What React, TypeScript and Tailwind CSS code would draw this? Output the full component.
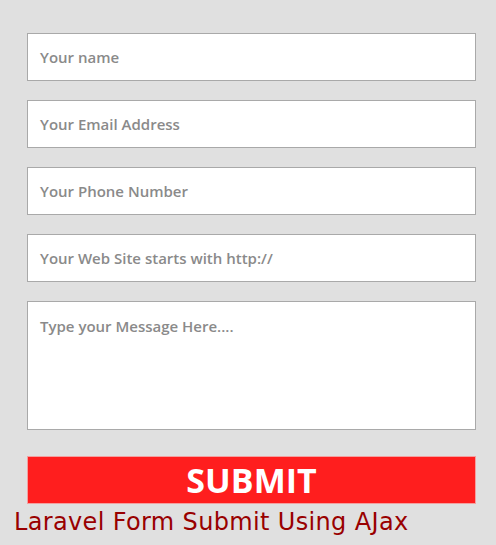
import React from "react";

export default function App() {
  const fields = [
    "Your name",
    "Your Email Address",
    "Your Phone Number",
    "Your Web Site starts with http://",
  ];
  return (
    <div className="w-[496px] h-[545px] bg-[#e0e0e0] overflow-hidden">
      <div className="pt-[33px] pl-[27px] flex flex-col w-[476px]">
        {fields.map((f) => (
          <div
            key={f}
            className="h-[48px] w-[449px] mb-[19px] bg-white border border-[#a9a9a9] flex items-center pl-[12px] text-[15px] font-semibold text-[#8a8a8a] font-['Open_Sans',sans-serif]"
          >
            {f}
          </div>
        ))}
        <div className="h-[129px] w-[449px] bg-white border border-[#a9a9a9] pl-[12px] pt-[12px] text-[15px] font-semibold leading-[24px] text-[#8a8a8a] font-['Open_Sans',sans-serif]">
          Type your Message Here....
        </div>
        <div className="mt-[26px] h-[48px] w-[449px] bg-[#ff1e1e] border border-[#f3a0a0] flex items-center justify-center text-white font-bold text-[34px] font-['Open_Sans',sans-serif]">
          SUBMIT
        </div>
      </div>
      <div className="mt-[3px] pl-[14px] text-[24px] leading-[30px] tracking-[0.35px] text-[#990000] font-['DejaVu_Sans',sans-serif]">
        Laravel Form Submit Using AJax
      </div>
    </div>
  );
}
